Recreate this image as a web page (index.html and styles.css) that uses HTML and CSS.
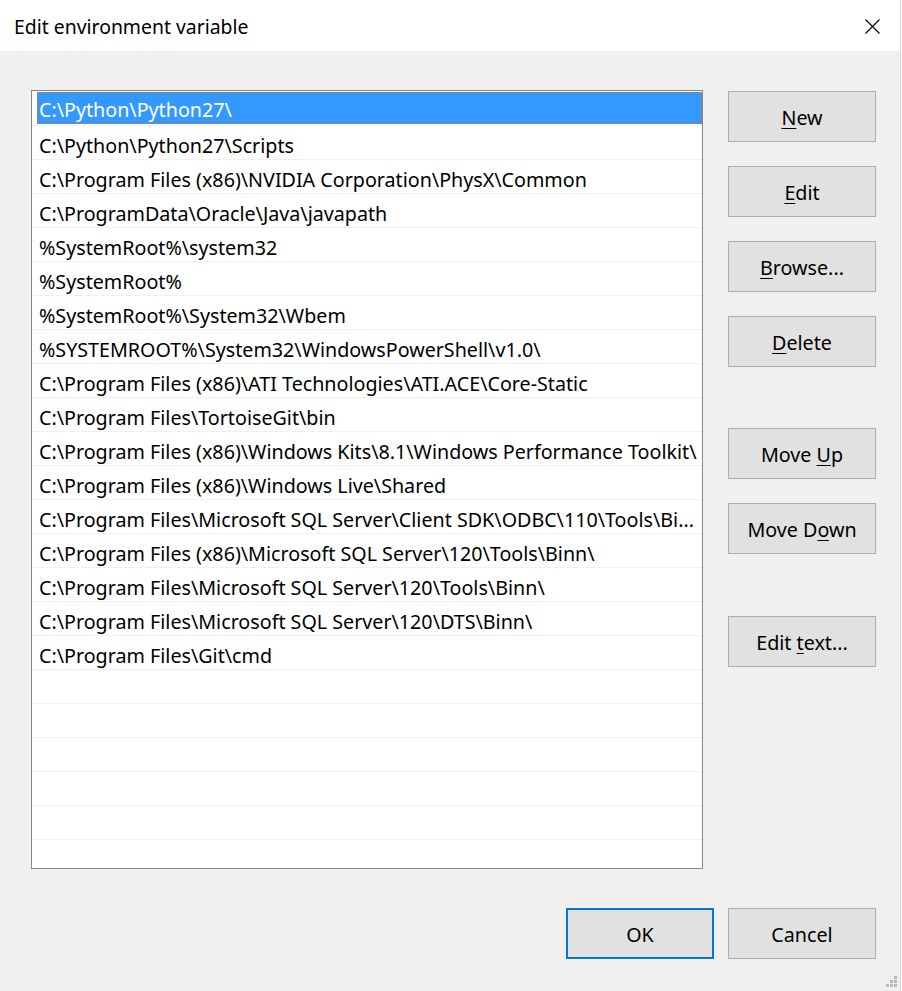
FILE: index.html
```html
<!DOCTYPE html>
<html lang="en">
<head>
    <meta charset="UTF-8">
    <title>Edit environment variable</title>
    <link rel="stylesheet" href="styles.css">
</head>
<body>
<div class="dialog">
    <div class="titlebar">
        <span class="title">Edit environment variable</span>
        <svg class="close" width="15" height="15" viewBox="0 0 15 15">
            <path d="M0.5 0.5 L14.5 14.5 M14.5 0.5 L0.5 14.5" stroke="#000" stroke-width="1.1" fill="none"/>
        </svg>
    </div>
    <div class="content">
        <div class="listbox">
            <div class="row selected"><span>C:\Python\Python27\</span></div>
            <div class="row">C:\Python\Python27\Scripts</div>
            <div class="row">C:\Program Files (x86)\NVIDIA Corporation\PhysX\Common</div>
            <div class="row">C:\ProgramData\Oracle\Java\javapath</div>
            <div class="row">%SystemRoot%\system32</div>
            <div class="row">%SystemRoot%</div>
            <div class="row">%SystemRoot%\System32\Wbem</div>
            <div class="row">%SYSTEMROOT%\System32\WindowsPowerShell\v1.0\</div>
            <div class="row">C:\Program Files (x86)\ATI Technologies\ATI.ACE\Core-Static</div>
            <div class="row">C:\Program Files\TortoiseGit\bin</div>
            <div class="row">C:\Program Files (x86)\Windows Kits\8.1\Windows Performance Toolkit\</div>
            <div class="row">C:\Program Files (x86)\Windows Live\Shared</div>
            <div class="row">C:\Program Files\Microsoft SQL Server\Client SDK\ODBC\110\Tools\Bi...</div>
            <div class="row">C:\Program Files (x86)\Microsoft SQL Server\120\Tools\Binn\</div>
            <div class="row">C:\Program Files\Microsoft SQL Server\120\Tools\Binn\</div>
            <div class="row">C:\Program Files\Microsoft SQL Server\120\DTS\Binn\</div>
            <div class="row">C:\Program Files\Git\cmd</div>
            <div class="row"></div>
            <div class="row"></div>
            <div class="row"></div>
            <div class="row"></div>
            <div class="row"></div>
            <div class="row"></div>
        </div>
        <div class="side-buttons">
            <button><u>N</u>ew</button>
            <button><u>E</u>dit</button>
            <button><u>B</u>rowse...</button>
            <button><u>D</u>elete</button>
            <button class="group-start">Move <u>U</u>p</button>
            <button>Move D<u>o</u>wn</button>
            <button class="group-start">Edit <u>t</u>ext...</button>
        </div>
    </div>
    <div class="footer">
        <button class="default">OK</button>
        <button>Cancel</button>
    </div>
    <div class="grip">
        <i style="grid-area: 1 / 3"></i>
        <i style="grid-area: 2 / 2"></i>
        <i style="grid-area: 2 / 3"></i>
        <i style="grid-area: 3 / 1"></i>
        <i style="grid-area: 3 / 2"></i>
        <i style="grid-area: 3 / 3"></i>
    </div>
</div>
</body>
</html>
```

FILE: styles.css
```css
body {
    margin: 0;
    background-color: #fff;
    font-family: 'Noto Sans', 'Open Sans', sans-serif;
    color: #000;
}

.dialog {
    position: relative;
    width: 900px;
    height: 991px;
    background-color: #f0f0f0;
    border-right: 1px solid #d9d9d9;
    display: flex;
    flex-direction: column;
}

.titlebar {
    height: 51px;
    background-color: #fff;
    display: flex;
    align-items: center;
    justify-content: space-between;
    padding: 0 20px 0 14px;
    flex-shrink: 0;
}

.title {
    font-size: 19.4px;
    margin-top: 2px;
}

.close {
    display: block;
    margin-top: 2px;
}

.content {
    display: flex;
    padding: 39px 0 0 31px;
    gap: 25px;
}

.listbox {
    width: 670px;
    height: 777px;
    background-color: #fff;
    border: 1px solid #828790;
    overflow: hidden;
    font-size: 19.7px;
}

.row {
    height: 30px;
    padding-top: 3px;
    line-height: 33px;
    border-bottom: 1px solid #f0f0f0;
    padding-left: 7px;
    white-space: nowrap;
    overflow: hidden;
}

.row.selected {
    padding-left: 5px;
    padding-top: 1px;
    height: 33px;
    line-height: 33px;
}

.row.selected span {
    display: block;
    height: 32px;
    line-height: 35px;
    background-color: #3399ff;
    color: #fff;
    padding-left: 2px;
    outline: 1px dotted #cc7722;
    outline-offset: -1px;
    overflow: hidden;
}

button {
    font-family: inherit;
    font-size: 19.7px;
    color: #000;
    width: 148px;
    height: 51px;
    background-color: #e1e1e1;
    border: 1px solid #adadad;
    border-radius: 0;
    padding: 2px 0 0;
}

button u {
    text-underline-offset: 3px;
}

.side-buttons {
    display: flex;
    flex-direction: column;
    gap: 24px;
    padding-top: 1px;
}

.side-buttons .group-start {
    margin-top: 37px;
}

.side-buttons .group-start:last-child {
    margin-top: 38px;
}

.footer {
    display: flex;
    justify-content: flex-end;
    gap: 14px;
    padding: 39px 24px 0 0;
}

.footer .default {
    border: 2px solid #0078d7;
}

.grip {
    position: absolute;
    right: 3px;
    bottom: 4px;
    display: grid;
    grid-template-columns: repeat(3, 3px);
    grid-template-rows: repeat(3, 3px);
    gap: 1px;
}

.grip i {
    background-color: #b8b8b8;
}
```
